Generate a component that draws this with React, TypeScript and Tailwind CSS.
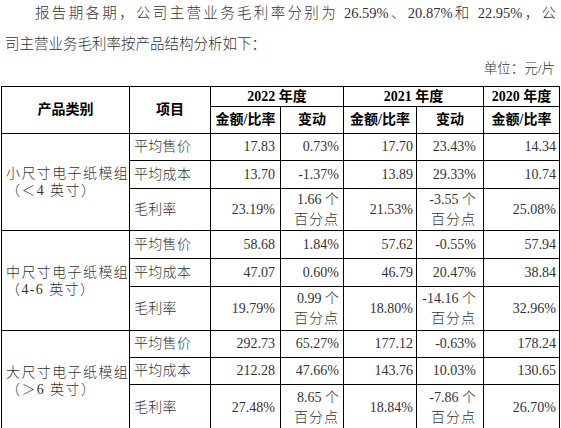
import React from "react";

type Cell = string | [string, string];
type Row = { item: string; vals: Cell[]; h: string };
type Group = { l1: string; l2: string; rows: Row[] };

const groups: Group[] = [
  {
    l1: "小尺寸电子纸模组",
    l2: "（＜4 英寸）",
    rows: [
      { item: "平均售价", vals: ["17.83", "0.73%", "17.70", "23.43%", "14.34"], h: "h-[27px]" },
      { item: "平均成本", vals: ["13.70", "-1.37%", "13.89", "29.33%", "10.74"], h: "h-[28px]" },
      { item: "毛利率", vals: ["23.19%", ["1.66 个", "百分点"], "21.53%", ["-3.55 个", "百分点"], "25.08%"], h: "h-[42px]" },
    ],
  },
  {
    l1: "中尺寸电子纸模组",
    l2: "（4-6 英寸）",
    rows: [
      { item: "平均售价", vals: ["58.68", "1.84%", "57.62", "-0.55%", "57.94"], h: "h-[28px]" },
      { item: "平均成本", vals: ["47.07", "0.60%", "46.79", "20.47%", "38.84"], h: "h-[28px]" },
      { item: "毛利率", vals: ["19.79%", ["0.99 个", "百分点"], "18.80%", ["-14.16 个", "百分点"], "32.96%"], h: "h-[44px]" },
    ],
  },
  {
    l1: "大尺寸电子纸模组",
    l2: "（＞6 英寸）",
    rows: [
      { item: "平均售价", vals: ["292.73", "65.27%", "177.12", "-0.63%", "178.24"], h: "h-[27px]" },
      { item: "平均成本", vals: ["212.28", "47.66%", "143.76", "10.03%", "130.65"], h: "h-[27px]" },
      { item: "毛利率", vals: ["27.48%", ["8.65 个", "百分点"], "18.84%", ["-7.86 个", "百分点"], "26.70%"], h: "h-[47px]" },
    ],
  },
];

const padR = ["pr-[5px]", "pr-[4px]", "pr-[3px]", "pr-[7px]", "pr-[3px]"];

const td = "border border-black p-0";
const th = "border border-black p-0 font-bold text-black text-center";

export default function App() {
  return (
    <div
      className="w-[561px] h-[428px] overflow-hidden bg-white text-[#333333] font-light"
      style={{ fontFamily: "'Liberation Serif', 'Noto Sans CJK SC', serif" }}
    >
      <div className="px-[5px] text-[14.5px] leading-[31px] -mt-[2px]">
        <div className="pl-[30px] text-justify [text-align-last:justify] whitespace-nowrap">
          报告期各期，公司主营业务毛利率分别为 26.59%、20.87%和 22.95%，公
        </div>
        <div>司主营业务毛利率按产品结构分析如下：</div>
      </div>
      <div className="text-right pr-[6px] text-[13.5px] leading-[18px]">单位：元/片</div>
      <table className="table-fixed border-collapse ml-[1px] mt-[8px] w-[558px] text-[14px]">
        <colgroup>
          <col className="w-[128px]" />
          <col className="w-[81px]" />
          <col className="w-[70px]" />
          <col className="w-[63px]" />
          <col className="w-[73px]" />
          <col className="w-[67px]" />
          <col className="w-[76px]" />
        </colgroup>
        <thead>
          <tr className="h-[20px] leading-[18px]">
            <th rowSpan={2} className={th}>产品类别</th>
            <th rowSpan={2} className={th}>项目</th>
            <th colSpan={2} className={th}>2022 年度</th>
            <th colSpan={2} className={th}>2021 年度</th>
            <th className={th}>2020 年度</th>
          </tr>
          <tr className="h-[27px] leading-[18px]">
            <th className={th}>金额/比率</th>
            <th className={th}>变动</th>
            <th className={th}>金额/比率</th>
            <th className={th}>变动</th>
            <th className={th}>金额/比率</th>
          </tr>
        </thead>
        <tbody>
          {groups.map((g) =>
            g.rows.map((r, i) => (
              <tr key={g.l1 + r.item} className={r.h + " leading-[20px]"}>
                {i === 0 && (
                  <td rowSpan={3} className={td + " pl-[4px] leading-[17px] tracking-[1.4px] whitespace-nowrap"}>
                    <div>{g.l1}</div>
                    <div>{g.l2}</div>
                  </td>
                )}
                <td className={td + " pl-[4px] tracking-[0.3px]"}>{r.item}</td>
                {r.vals.map((v, k) => (
                  <td key={k} className={td + " text-right whitespace-nowrap " + padR[k]}>
                    {Array.isArray(v) ? (
                      <>
                        <div>{v[0]}</div>
                        <div className="tracking-[1px]">{v[1]}</div>
                      </>
                    ) : (
                      v
                    )}
                  </td>
                ))}
              </tr>
            ))
          )}
        </tbody>
      </table>
    </div>
  );
}
